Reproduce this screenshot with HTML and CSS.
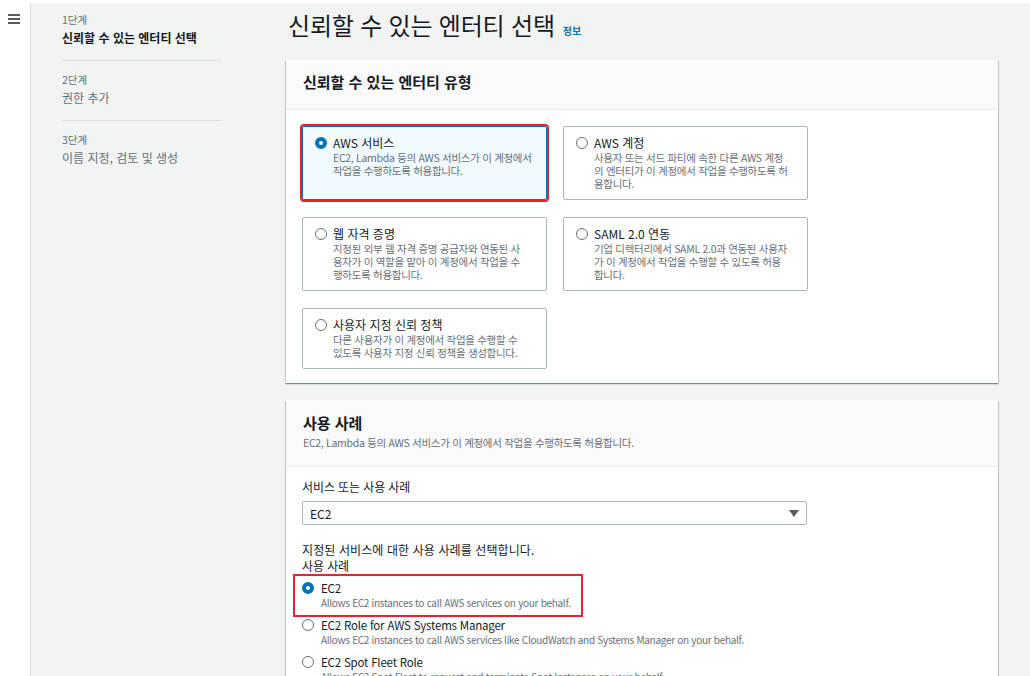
FILE: index.html
```html
<!DOCTYPE html>
<html lang="ko">
<head>
<meta charset="utf-8">
<title>신뢰할 수 있는 엔터티 선택</title>
<link rel="stylesheet" href="styles.css">
</head>
<body>
<div class="app">
  <div class="rail">
    <span class="burger"><i></i><i></i><i></i></span>
  </div>
  <nav class="steps">
    <ol class="step-list">
      <li class="step active"><small class="step-no">1단계</small><span class="step-name">신뢰할 수 있는 엔터티 선택</span></li>
      <li class="step"><small class="step-no">2단계</small><span class="step-name">권한 추가</span></li>
      <li class="step"><small class="step-no">3단계</small><span class="step-name">이름 지정, 검토 및 생성</span></li>
    </ol>
  </nav>
  <main class="main">
    <h1 class="title">신뢰할 수 있는 엔터티 선택<a class="info">정보</a></h1>

    <section class="card">
      <header class="card-head">
        <h2 class="card-title">신뢰할 수 있는 엔터티 유형</h2>
      </header>
      <div class="tiles">
        <div class="tile selected">
          <span class="radio on"></span>
          <div class="tile-text">
            <div class="tile-title">AWS 서비스</div>
            <div class="tile-desc">EC2, Lambda 등의 AWS 서비스가 이 계정에서<br>작업을 수행하도록 허용합니다.</div>
          </div>
        </div>
        <div class="tile">
          <span class="radio"></span>
          <div class="tile-text">
            <div class="tile-title">AWS 계정</div>
            <div class="tile-desc">사용자 또는 서드 파티에 속한 다른 AWS 계정<br>의 엔터티가 이 계정에서 작업을 수행하도록 허<br>용합니다.</div>
          </div>
        </div>
        <div class="tile">
          <span class="radio"></span>
          <div class="tile-text">
            <div class="tile-title">웹 자격 증명</div>
            <div class="tile-desc">지정된 외부 웹 자격 증명 공급자와 연동된 사<br>용자가 이 역할을 맡아 이 계정에서 작업을 수<br>행하도록 허용합니다.</div>
          </div>
        </div>
        <div class="tile">
          <span class="radio"></span>
          <div class="tile-text">
            <div class="tile-title">SAML 2.0 연동</div>
            <div class="tile-desc">기업 디렉터리에서 SAML 2.0과 연동된 사용자<br>가 이 계정에서 작업을 수행할 수 있도록 허용<br>합니다.</div>
          </div>
        </div>
        <div class="tile">
          <span class="radio"></span>
          <div class="tile-text">
            <div class="tile-title">사용자 지정 신뢰 정책</div>
            <div class="tile-desc">다른 사용자가 이 계정에서 작업을 수행할 수<br>있도록 사용자 지정 신뢰 정책을 생성합니다.</div>
          </div>
        </div>
      </div>
    </section>

    <section class="card card-usecase">
      <header class="card-head usecase-head">
        <h2 class="card-title big">사용 사례</h2>
        <p class="card-sub">EC2, Lambda 등의 AWS 서비스가 이 계정에서 작업을 수행하도록 허용합니다.</p>
      </header>
      <div class="usecase-body">
        <div class="field-label">서비스 또는 사용 사례</div>
        <div class="select"><span class="select-value">EC2</span><span class="caret"></span></div>
        <div class="field-label hint">지정된 서비스에 대한 사용 사례를 선택합니다.</div>
        <div class="field-label">사용 사례</div>
        <div class="opt picked">
          <span class="radio on"></span>
          <div class="opt-text">
            <div class="opt-title">EC2</div>
            <div class="opt-desc">Allows EC2 instances to call AWS services on your behalf.</div>
          </div>
        </div>
        <div class="opt">
          <span class="radio"></span>
          <div class="opt-text">
            <div class="opt-title">EC2 Role for AWS Systems Manager</div>
            <div class="opt-desc">Allows EC2 instances to call AWS services like CloudWatch and Systems Manager on your behalf.</div>
          </div>
        </div>
        <div class="opt">
          <span class="radio"></span>
          <div class="opt-text">
            <div class="opt-title">EC2 Spot Fleet Role</div>
            <div class="opt-desc">Allows EC2 Spot Fleet to request and terminate Spot Instances on your behalf.</div>
          </div>
        </div>
      </div>
    </section>
  </main>
</div>
</body>
</html>
```
FILE: styles.css
```css
html, body {
  margin: 0;
  padding: 0;
}
body {
  height: 676px;
  overflow: hidden;
  background: #ffffff;
  font-family: "Noto Sans CJK KR", "Noto Sans", sans-serif;
  color: #16191f;
}
.app {
  display: flex;
  margin-top: 3px;
  height: 673px;
  background: #f2f3f3;
}
.rail {
  flex: none;
  width: 31px;
  box-sizing: border-box;
  background: #ffffff;
  border-right: 1px solid #d5dbdb;
  padding-top: 11px;
}
.burger {
  display: flex;
  flex-direction: column;
  gap: 2px;
  width: 12px;
  margin-left: 8px;
}
.burger i {
  display: block;
  height: 2px;
  background: #545b64;
}
.steps {
  flex: none;
  width: 255px;
  box-sizing: border-box;
  padding-left: 31px;
}
.step-list {
  list-style: none;
  margin: 0;
  padding: 0;
  width: 160px;
}
.step {
  padding: 12px 0 14px;
  border-bottom: 1px solid #dde1e1;
}
.step:first-child {
  padding-top: 10px;
}
.step:last-child {
  border-bottom: 0;
}
.step-no {
  display: block;
  font-size: 10.5px;
  line-height: 14px;
  color: #687078;
  margin-bottom: 3px;
}
.step-name {
  display: block;
  font-size: 12px;
  line-height: 16px;
  color: #687078;
  white-space: nowrap;
}
.active .step-name {
  color: #16191f;
  font-weight: 700;
}
.main {
  flex: none;
  width: 712px;
  padding-top: 7px;
}
.title {
  margin: 0 0 20px 2px;
  font-size: 24px;
  font-weight: 400;
  line-height: 30px;
  letter-spacing: -0.2px;
  white-space: nowrap;
}
.info {
  font-size: 10px;
  line-height: 10px;
  font-weight: 700;
  color: #0073bb;
  letter-spacing: 0;
  margin-left: 8px;
}
.card {
  background: #ffffff;
  box-shadow: 0 1px 1px 0 rgba(0, 28, 36, 0.3), 1px 1px 1px 0 rgba(0, 28, 36, 0.15), -1px 1px 1px 0 rgba(0, 28, 36, 0.15);
}
.card-head {
  background: #fafafa;
  border-bottom: 1px solid #eaeded;
  padding: 12px 16px 17px 17px;
}
.card-title {
  margin: 0;
  font-size: 15px;
  line-height: 20px;
  font-weight: 700;
}
.card-title.big {
  font-size: 15px;
}
.tiles {
  display: grid;
  grid-template-columns: 245px 245px;
  column-gap: 16px;
  row-gap: 17px;
  padding: 16px 16px 14px;
}
.tile {
  display: flex;
  gap: 6px;
  box-sizing: border-box;
  border: 1px solid #aab7b8;
  border-radius: 2px;
  padding: 8px 12px 9px;
  background: #ffffff;
}
.tile.selected {
  background: #f1faff;
  border-color: #0073bb;
  outline: 2.5px solid #e5252e;
}
.radio {
  flex: none;
  width: 12px;
  height: 12px;
  margin-top: 2px;
  box-sizing: border-box;
  border-radius: 50%;
  border: 1.5px solid #687078;
  background: #ffffff;
}
.radio.on {
  border: 4px solid #0073bb;
}
.tile-title {
  font-size: 12px;
  line-height: 16px;
  white-space: nowrap;
}
.tile-desc {
  font-size: 10.5px;
  line-height: 13px;
  color: #687078;
  letter-spacing: -0.3px;
  white-space: nowrap;
}
.card-usecase {
  margin-top: 17px;
}
.usecase-head {
  padding: 13px 16px 16px 17px;
}
.card-sub {
  margin: 3px 0 0;
  font-size: 10.5px;
  line-height: 14px;
  color: #687078;
  letter-spacing: -0.3px;
}
.usecase-body {
  padding: 12px 16px 0;
}
.field-label {
  font-size: 12px;
  line-height: 16px;
  letter-spacing: -0.1px;
}
.hint {
  margin-top: 17px;
  letter-spacing: 0.1px;
}
.select {
  display: flex;
  align-items: center;
  justify-content: space-between;
  box-sizing: border-box;
  width: 505px;
  height: 24px;
  margin-top: 6px;
  padding: 0 7px;
  border: 1px solid #aab7b8;
  border-radius: 2px;
  font-size: 12px;
}
.caret {
  width: 0;
  height: 0;
  border-left: 5px solid transparent;
  border-right: 5px solid transparent;
  border-top: 7px solid #545b64;
}
.opt {
  position: relative;
  display: flex;
  gap: 7px;
  padding: 6px 0 1px;
}
.opt.picked::after {
  content: "";
  position: absolute;
  left: -9px;
  top: 0;
  width: 290px;
  height: 43px;
  box-sizing: border-box;
  border: 2.5px solid #e5252e;
  pointer-events: none;
}
.opt-title {
  font-size: 11.5px;
  line-height: 16px;
  letter-spacing: -0.2px;
  white-space: nowrap;
}
.opt-desc {
  font-size: 10px;
  line-height: 14px;
  color: #687078;
  letter-spacing: -0.3px;
  white-space: nowrap;
}
```
